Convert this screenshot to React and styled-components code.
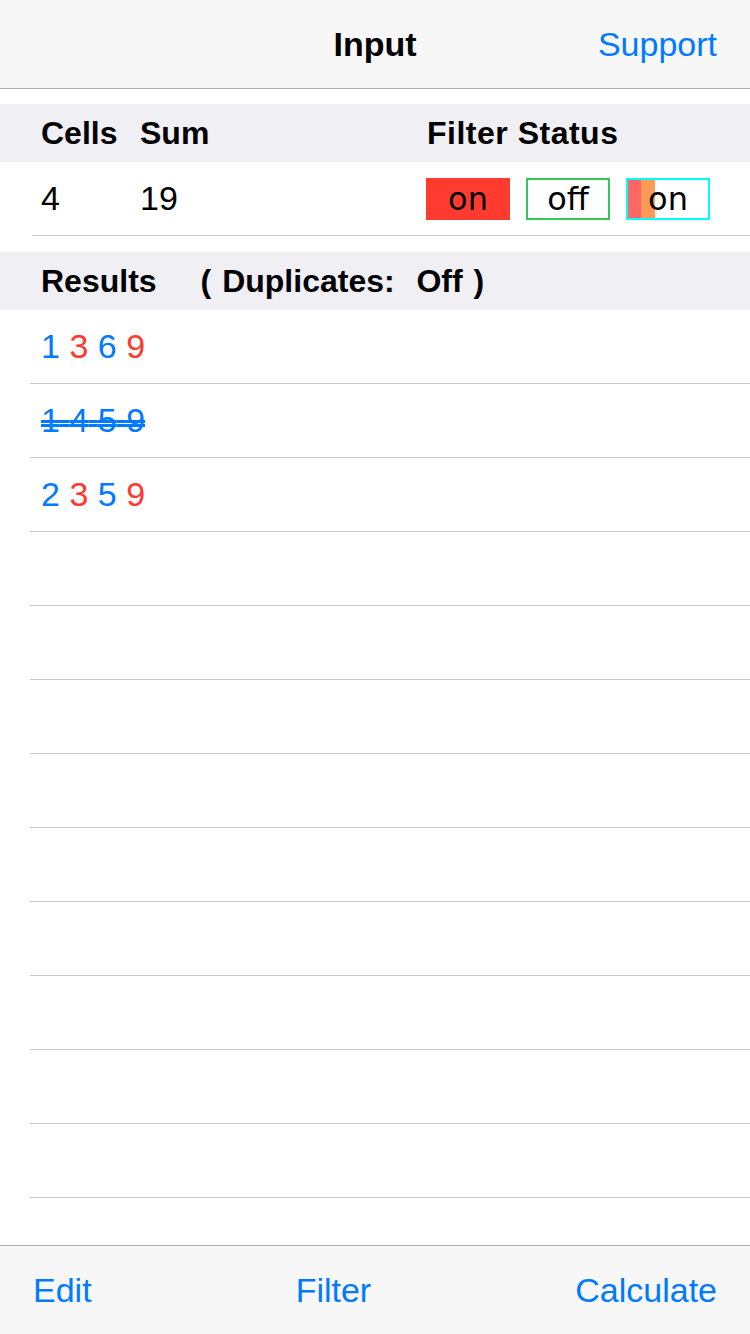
import React from "react";
import styled, { createGlobalStyle } from "styled-components";

const Global = createGlobalStyle`
  html, body { margin: 0; padding: 0; background: #fff; }
  body { font-family: "Liberation Sans", Arial, sans-serif; }
  * { box-sizing: border-box; }
`;

const BLUE = "#007aff";
const RED = "#ff3b30";

const Page = styled.div`
  width: 750px;
  height: 1334px;
  display: flex;
  flex-direction: column;
  overflow: hidden;
  background: #fff;
`;

const NavBar = styled.header`
  height: 89px;
  flex: none;
  background: #f7f7f7;
  border-bottom: 1px solid #b2b2b2;
  display: grid;
  grid-template-columns: 1fr auto 1fr;
  align-items: center;
  padding: 0 33px;
`;

const Title = styled.div`
  font-size: 34px;
  font-weight: 700;
  color: #000;
  grid-column: 2;
`;

const NavButton = styled.div`
  grid-column: 3;
  justify-self: end;
  font-size: 34px;
  color: ${BLUE};
`;

const Content = styled.main`
  flex: 1;
  overflow: hidden;
  padding-top: 15px;
  display: flex;
  flex-direction: column;
`;

const SectionHeader = styled.div`
  height: 58px;
  flex: none;
  background: #efeff4;
  display: flex;
  align-items: center;
  padding-left: 41px;
  font-size: 32px;
  font-weight: 700;
  color: #000;
`;

const Col = styled.div`
  width: ${(p) => p.$w}px;
  flex: none;
  white-space: pre;
  letter-spacing: ${(p) => p.$ls || 0}px;
  word-spacing: ${(p) => p.$ws || 0}px;
`;

const InfoRow = styled.div`
  height: 74px;
  flex: none;
  margin-left: 32px;
  padding-left: 9px;
  border-bottom: 1px solid #c8c7cc;
  display: flex;
  align-items: center;
  font-size: 34px;
  color: #000;
`;

const Boxes = styled.div`
  display: flex;
  gap: 16px;
  margin-left: -1px;
`;

const StatusBox = styled.div`
  position: relative;
  width: 84px;
  height: 42px;
  display: flex;
  align-items: center;
  justify-content: center;
  background: ${(p) => p.$bg || "#fff"};
  border: ${(p) => (p.$border ? `2px solid ${p.$border}` : "none")};
  font-family: "DejaVu Sans", sans-serif;
  font-size: 32px;
  line-height: 1;
  color: #000;
  overflow: hidden;
`;

const Stripe = styled.div`
  position: absolute;
  top: 0;
  bottom: 0;
  left: ${(p) => p.$left}px;
  width: ${(p) => p.$w}px;
  background: ${(p) => p.$color};
`;

const BoxLabel = styled.span`
  position: relative;
  padding-top: 1px;
`;

const Gap = styled.div`
  height: 16px;
  flex: none;
`;

const ResultsLabel = styled.span`
  margin-right: 44px;
`;

const ResultRow = styled.div`
  height: 74px;
  flex: none;
  margin-left: 30px;
  padding-left: 11px;
  border-bottom: 1px solid #c8c7cc;
  display: flex;
  align-items: center;
  font-size: 34px;
`;

const Combo = styled.span`
  white-space: pre;
  color: ${BLUE};
  text-decoration: ${(p) => (p.$struck ? `line-through double ${BLUE}` : "none")};
`;

const Digit = styled.span`
  color: ${(p) => (p.$red ? RED : BLUE)};
`;

const TabBar = styled.footer`
  height: 89px;
  flex: none;
  background: #f7f7f7;
  border-top: 1px solid #b2b2b2;
  display: flex;
  align-items: center;
  justify-content: space-between;
  padding: 0 33px;
`;

const TabButton = styled.div`
  font-size: 34px;
  color: ${BLUE};
`;

const results = [
  { struck: false, items: [["1", false], ["3", true], ["6", false], ["9", true]] },
  { struck: true, items: [["1", false], ["4", false], ["5", false], ["9", false]] },
  { struck: false, items: [["2", false], ["3", true], ["5", false], ["9", true]] },
];

export default function App() {
  const emptyRows = Array.from({ length: 10 });
  return (
    <>
      <Global />
      <Page>
        <NavBar>
          <Title>Input</Title>
          <NavButton>Support</NavButton>
        </NavBar>
        <Content>
          <SectionHeader>
            <Col $w={99}>Cells</Col>
            <Col $w={287}>Sum</Col>
            <Col $w={220} $ls={0.5}>Filter Status</Col>
          </SectionHeader>
          <InfoRow>
            <Col $w={99}>4</Col>
            <Col $w={287}>19</Col>
            <Boxes>
              <StatusBox $bg={RED}>
                <BoxLabel>on</BoxLabel>
              </StatusBox>
              <StatusBox $border="#34c759">
                <BoxLabel>off</BoxLabel>
              </StatusBox>
              <StatusBox $border="#00ffff">
                <Stripe $left={0} $w={13} $color="#ff6666" />
                <Stripe $left={13} $w={14} $color="#ff9955" />
                <BoxLabel>on</BoxLabel>
              </StatusBox>
            </Boxes>
          </InfoRow>
          <Gap />
          <SectionHeader>
            <ResultsLabel>Results</ResultsLabel>
            <Col $w={340} $ws={2}>{"( Duplicates:  Off )"}</Col>
          </SectionHeader>
          {results.map((r, i) => (
            <ResultRow key={i}>
              <Combo $struck={r.struck}>
                {r.items.map(([d, red], j) => (
                  <React.Fragment key={j}>
                    {j > 0 ? " " : ""}
                    <Digit $red={red}>{d}</Digit>
                  </React.Fragment>
                ))}
              </Combo>
            </ResultRow>
          ))}
          {emptyRows.map((_, i) => (
            <ResultRow key={`e${i}`} />
          ))}
        </Content>
        <TabBar>
          <TabButton>Edit</TabButton>
          <TabButton>Filter</TabButton>
          <TabButton>Calculate</TabButton>
        </TabBar>
      </Page>
    </>
  );
}
